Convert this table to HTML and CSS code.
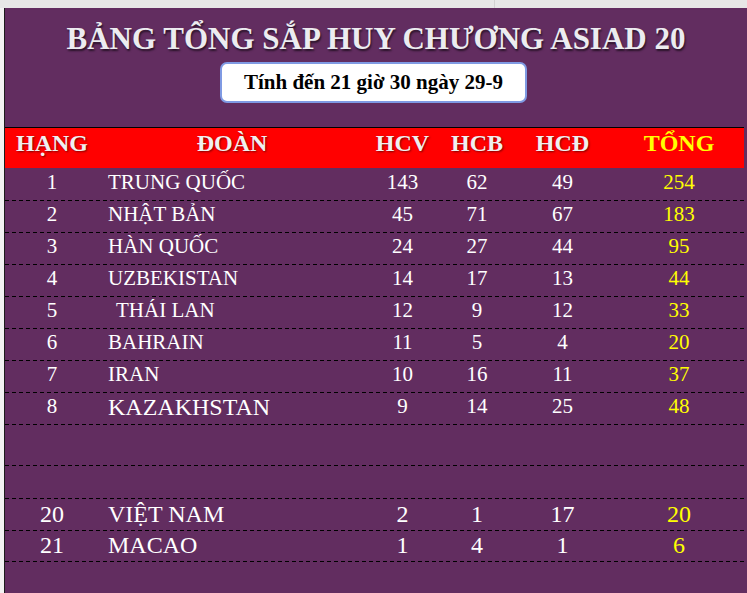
FILE: index.html
```html
<!DOCTYPE html>
<html lang="vi">
<head>
<meta charset="utf-8">
<title>Bảng tổng sắp huy chương ASIAD 20</title>
<link rel="stylesheet" href="styles.css">
</head>
<body>
<div class="topbar"><div class="tab"></div></div>
<div class="sheet">
  <div class="titlebox">
    <h1 class="title">BẢNG TỔNG SẮP HUY CHƯƠNG ASIAD 20</h1>
    <div class="subwrap"><div class="sub">Tính đến 21 giờ 30 ngày 29-9</div></div>
  </div>
  <div class="grid thead">
    <div class="c">HẠNG</div><div class="c">ĐOÀN</div><div class="c">HCV</div><div class="c">HCB</div><div class="c">HCĐ</div><div class="c tot">TỔNG</div>
  </div>
  <div class="grid row first">
    <div class="c">1</div><div class="name">TRUNG QUỐC</div><div class="c">143</div><div class="c">62</div><div class="c">49</div><div class="c tot">254</div>
  </div>
  <div class="grid row">
    <div class="c">2</div><div class="name">NHẬT BẢN</div><div class="c">45</div><div class="c">71</div><div class="c">67</div><div class="c tot">183</div>
  </div>
  <div class="grid row">
    <div class="c">3</div><div class="name">HÀN QUỐC</div><div class="c">24</div><div class="c">27</div><div class="c">44</div><div class="c tot">95</div>
  </div>
  <div class="grid row">
    <div class="c">4</div><div class="name">UZBEKISTAN</div><div class="c">14</div><div class="c">17</div><div class="c">13</div><div class="c tot">44</div>
  </div>
  <div class="grid row">
    <div class="c">5</div><div class="name indent">THÁI LAN</div><div class="c">12</div><div class="c">9</div><div class="c">12</div><div class="c tot">33</div>
  </div>
  <div class="grid row">
    <div class="c">6</div><div class="name">BAHRAIN</div><div class="c">11</div><div class="c">5</div><div class="c">4</div><div class="c tot">20</div>
  </div>
  <div class="grid row">
    <div class="c">7</div><div class="name">IRAN</div><div class="c">10</div><div class="c">16</div><div class="c">11</div><div class="c tot">37</div>
  </div>
  <div class="grid row">
    <div class="c">8</div><div class="name big">KAZAKHSTAN</div><div class="c">9</div><div class="c">14</div><div class="c">25</div><div class="c tot">48</div>
  </div>
  <div class="grid row empty1"></div>
  <div class="grid row empty2"></div>
  <div class="grid row large r20">
    <div class="c">20</div><div class="name">VIỆT NAM</div><div class="c">2</div><div class="c">1</div><div class="c">17</div><div class="c tot">20</div>
  </div>
  <div class="grid row large r21">
    <div class="c">21</div><div class="name">MACAO</div><div class="c">1</div><div class="c">4</div><div class="c">1</div><div class="c tot">6</div>
  </div>
</div>
</body>
</html>
```

FILE: styles.css
```css
html, body {
  margin: 0;
  height: 100%;
  overflow: hidden;
  background: #f2f2f2;
}
body {
  font-family: "Liberation Serif", "Times New Roman", serif;
}
.topbar {
  height: 8px;
  background: #e7e7e7;
  display: flex;
}
.tab {
  width: 494px;
  border-right: 1px solid #d2d2d2;
}
.sheet {
  margin-left: 4px;
  border-left: 1px solid #1c1c1c;
  background: #622d60;
  min-height: 600px;
}
.titlebox {
  height: 119px;
  padding-top: 13px;
  box-sizing: border-box;
}
.title {
  margin: 0;
  font-size: 31px;
  line-height: 36px;
  font-weight: bold;
  text-align: center;
  color: #ececf0;
  text-shadow: 1px 2px 2px rgba(0, 0, 0, 0.6);
}
.subwrap {
  margin-top: 5px;
  padding-left: 215px;
}
.sub {
  width: 307px;
  height: 41px;
  box-sizing: border-box;
  border: 2px solid #7f9ae3;
  border-radius: 7px;
  background: #fff;
  display: flex;
  align-items: center;
  justify-content: center;
  font-weight: bold;
  font-size: 21px;
  color: #000;
}
.grid {
  display: grid;
  grid-template-columns: 94px 266px 75px 74px 97px 136px;
  box-sizing: border-box;
}
.c {
  text-align: center;
}
.thead {
  height: 41px;
  border-top: 1px solid #000;
  background: #ff0000;
  margin-right: 3px;
  padding-top: 3px;
  font-weight: bold;
  font-size: 24px;
  line-height: 24px;
  color: #f0f0f0;
  text-shadow: 1px 1px 2px rgba(60, 0, 0, 0.65);
}
.thead .tot {
  color: #ffff00;
  text-shadow: none;
}
.row {
  height: 32px;
  align-items: center;
  padding-bottom: 5px;
  font-size: 21px;
  line-height: 1;
  color: #fff;
  background: linear-gradient(to right, #000 0 4px, transparent 4px) left bottom / 7px 1px repeat-x;
}
.row.first {
  height: 33px;
}
.row .tot {
  color: #ffff00;
}
.name {
  padding-left: 9px;
  white-space: nowrap;
}
.name.indent {
  padding-left: 17px;
}
.name.big {
  font-size: 24px;
}
.row.empty1 {
  height: 41px;
}
.row.empty2 {
  height: 33px;
}
.row.large {
  font-size: 24px;
  padding-bottom: 3px;
}
.row.r20 {
  height: 32px;
}
.row.r21 {
  height: 31px;
}
```
